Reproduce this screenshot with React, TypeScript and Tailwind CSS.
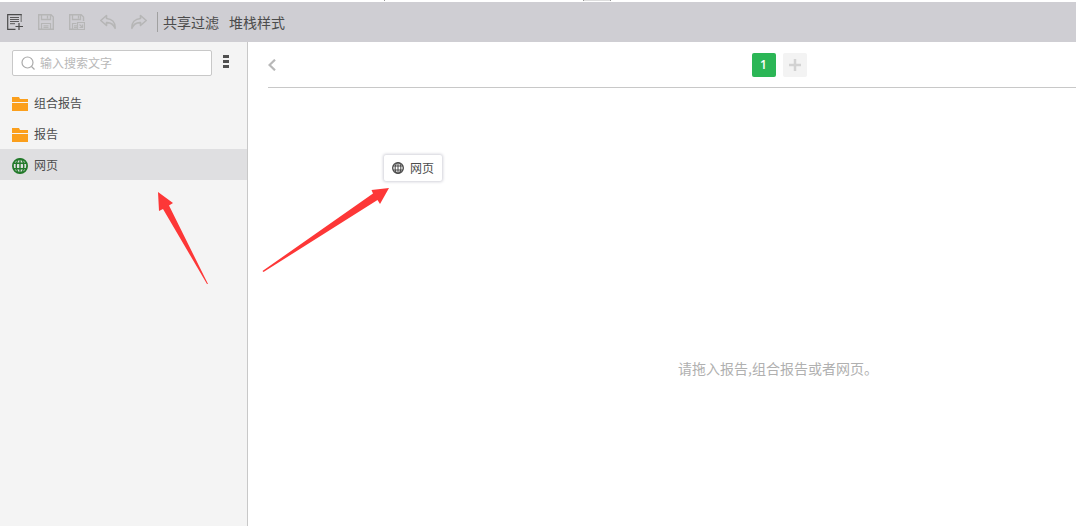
import type { ReactNode } from "react";

const tools = [
  { id: "save", label: "保存" },
  { id: "save-as", label: "另存为" },
  { id: "undo", label: "撤销" },
  { id: "redo", label: "重做" },
];

const items = [
  { name: "组合报告", type: "folder" },
  { name: "报告", type: "folder" },
  { name: "网页", type: "web" },
];

function Icon({ children, className }: { children: ReactNode; className?: string }) {
  return (
    <svg
      viewBox="0 0 16 16"
      fill="none"
      stroke="currentColor"
      className={className ?? "size-4"}
      aria-hidden="true"
    >
      {children}
    </svg>
  );
}

function NewIcon() {
  return (
    <Icon>
      <path d="M14.200 8V.7" strokeWidth="1.300" opacity=".6" />
      <path d="M14.800 .6H.7v14.700H8.500" strokeWidth="1.200" />
      <path d="M3 3.500h9M3 5.500h9M3 7.500h9M3 9.700h5" opacity=".9" />
      <path d="M12 9v7M8.500 12.500H16" strokeWidth="1.200" />
    </Icon>
  );
}

function ToolIcon({ id }: { id: string }) {
  if (id === "save") {
    return (
      <Icon>
        <path d="M.7 .7h12.300l2.300 2.300v12.300H.7z" strokeWidth="1.400" />
        <path d="M3.500 .5v5h9v-5M9.500 1.500v3" strokeWidth="1.300" />
        <path d="M3.500 15.500v-6h9v6M5.500 11.800h5M5.500 13.500h5" strokeWidth="1.200" />
      </Icon>
    );
  }
  if (id === "save-as") {
    return (
      <Icon>
        <path d="M8.500 15.300H.7V.7h11.500l2.300 2.300V7" strokeWidth="1.400" />
        <path d="M3.500 .5v5h8v-5M9.500 1.500v3" strokeWidth="1.300" />
        <path d="M3.500 15.500v-6h4M5 11.800h3M5 13.500h3" strokeWidth="1.200" />
        <path d="M8.500 8.500h7v7h-7zM10.500 10.500l3 3M13.500 10.500v3h-3" strokeWidth="1.200" />
      </Icon>
    );
  }
  return (
    <Icon className={id === "redo" ? "size-4 -scale-x-100" : "size-4"}>
      <path
        d="M6.500 1.500.8 6.500l5.700 5V8.600c4-.2 6.800 1.200 8.600 5.700C15.400 8.500 12 4.800 6.500 4.500z"
        strokeWidth="1.600"
        strokeLinejoin="round"
      />
    </Icon>
  );
}

function FolderIcon() {
  return (
    <svg viewBox="0 0 16 14" className="mt-0.5 h-3.5 w-4" fill="#fb9f1c" aria-hidden="true">
      <path d="M0 0h7l1 2h8v3H0zM0 6h16v8H0z" />
    </svg>
  );
}

function GlobeIcon({ className }: { className: string }) {
  return (
    <Icon className={className}>
      <circle cx="8" cy="8" r="7.100" strokeWidth="1.800" />
      <ellipse cx="8" cy="8" rx="3.800" ry="7.100" strokeWidth="1.400" />
      <path d="M8 1v14M1.500 5.300h13M1.500 10.700h13" strokeWidth="1.400" />
    </Icon>
  );
}

function Sidebar() {
  return (
    <aside className="w-62 shrink-0 border-r border-[#c8c8c8] bg-[#f4f4f4]">
      <div className="flex h-[45px] items-start pt-2 pl-3">
        <label className="flex h-[26px] w-50 items-center gap-1 rounded-xs border border-[#c8c8c8] bg-white pl-[7px]">
          <Icon className="size-4 shrink-0 text-[#aaaaaa]">
            <circle cx="7.500" cy="7.500" r="5.500" strokeWidth="1.200" />
            <path d="m11.500 11.500 3 3" strokeWidth="1.200" />
          </Icon>
          <input
            type="text"
            aria-label="搜索"
            placeholder="输入搜索文字"
            className="w-full min-w-0 bg-transparent text-xs outline-none placeholder:text-[#b8b8b8]"
          />
        </label>
        <button type="button" aria-label="更多" className="ml-[11px] flex flex-col gap-0.5 pt-[5px]">
          <span className="h-[3px] w-1.5 bg-[#505050]" />
          <span className="h-[3px] w-1.5 bg-[#505050]" />
          <span className="h-[3px] w-1.5 bg-[#505050]" />
        </button>
      </div>
      <ul>
        {items.map((item) => (
          <li key={item.name}>
            <button
              type="button"
              className={
                item.type === "web"
                  ? "flex h-[31px] w-full items-center gap-1.5 bg-[#dfdfe1] px-3 text-xs"
                  : "flex h-[31px] w-full items-center gap-1.5 px-3 text-xs"
              }
            >
              {item.type === "web" ? (
                <GlobeIcon className="mt-0.5 size-4 text-[#237a2b]" />
              ) : (
                <FolderIcon />
              )}
              {item.name}
            </button>
          </li>
        ))}
      </ul>
    </aside>
  );
}

function Board() {
  return (
    <main className="relative flex min-w-0 flex-1 overflow-hidden bg-white pl-5">
      {/* the board is wider than the window and runs off to the right */}
      <div className="flex w-[1020px] shrink-0 flex-col">
        <div className="flex h-[46px] items-center border-b border-[#c8c8c8]">
          <button type="button" aria-label="上一页" className="w-4 text-[#b8b8b8]">
            <svg viewBox="0 0 8 12" className="h-3 w-2" fill="none" stroke="currentColor" strokeWidth="2.200" aria-hidden="true">
              <path d="M7 .7 1.500 6 7 11.300" />
            </svg>
          </button>
          <div className="flex flex-1 justify-center gap-[7px] pr-3.5">
            <button
              type="button"
              className="size-6 rounded-xs bg-[#2bb656] font-['Open_Sans',sans-serif] text-xs font-semibold text-white"
            >
              1
            </button>
            <button
              type="button"
              aria-label="添加"
              className="flex size-6 items-center justify-center rounded-xs bg-[#f3f3f3] text-[#d2d2d2]"
            >
              <svg viewBox="0 0 12 12" className="size-3" stroke="currentColor" strokeWidth="2.500" aria-hidden="true">
                <path d="M6 0v12M0 6h12" />
              </svg>
            </button>
          </div>
        </div>
        <div className="flex flex-1 items-center justify-center pt-[122px]">
          <p className="text-sm text-[#b0b0b0]">请拖入报告,组合报告或者网页。</p>
        </div>
      </div>
      <div className="absolute top-[113px] left-[136px] flex h-[26px] items-center gap-1.5 rounded-xs bg-white px-2 text-xs shadow-[0_0_3px_1px_#d2d2da]">
        <GlobeIcon className="size-3 text-[#4c4c4c]" />
        网页
      </div>
    </main>
  );
}

export default function App() {
  return (
    <div className="relative flex min-h-screen flex-col overflow-hidden bg-white font-['Noto_Sans_CJK_SC',sans-serif] text-[#4c4c4c]">
      <div className="flex h-0.5 items-start pl-96">
        <span className="h-px w-px bg-[#999999]" />
        <span className="ml-[198px] h-px w-7 border-x border-[#999999] bg-[#dddddd]" />
      </div>
      <header className="flex h-10 shrink-0 items-center bg-[#cfced3] pl-[7px]">
        <div className="flex items-center gap-[15px]">
          <button type="button" aria-label="新建">
            <NewIcon />
          </button>
          {tools.map((tool) => (
            <button key={tool.id} type="button" aria-label={tool.label} disabled className="text-[#b6b6b6]">
              <ToolIcon id={tool.id} />
            </button>
          ))}
        </div>
        <span className="ml-2.5 h-5 w-px bg-[#a0a0a0]" />
        <nav className="ml-[5px] flex gap-2.5 text-sm">
          <button type="button">共享过滤</button>
          <button type="button">堆栈样式</button>
        </nav>
      </header>
      <div className="flex flex-1">
        <Sidebar />
        <Board />
      </div>
      <svg
        viewBox="0 0 240 90"
        className="pointer-events-none absolute top-[186px] left-[152px] h-[90px] w-[240px] overflow-visible"
        fill="#fd3737"
        aria-hidden="true"
      >
        <path d="M6 6 21 17 17 19.500 56 98h-1L11 23 7 25z" />
        <path d="M237 2 219.500 4 221 7.500 110.500 85l1 1L225.500 14 228 18z" />
      </svg>
    </div>
  );
}
